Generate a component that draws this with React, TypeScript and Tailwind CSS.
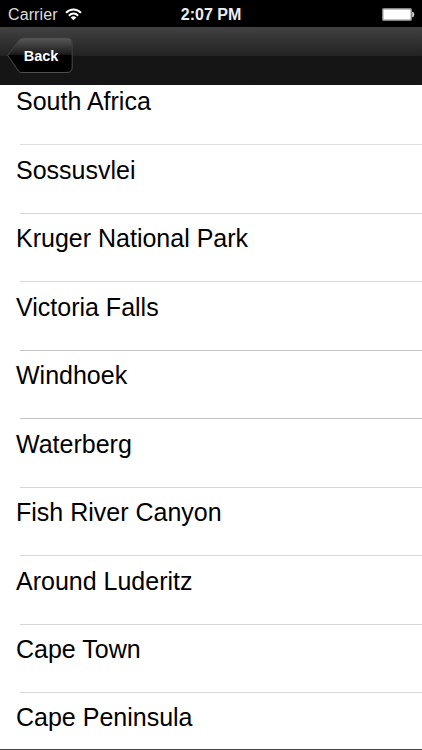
interface Place {
  name: string;
  line: string;
}

const PLACES: Place[] = [
  { name: "South Africa", line: "bg-[#dedede]" },
  { name: "Sossusvlei", line: "bg-[#d6d6d6]" },
  { name: "Kruger National Park", line: "bg-[#d6d6d6]" },
  { name: "Victoria Falls", line: "bg-[#c4c4c4]" },
  { name: "Windhoek", line: "bg-[#c4c4c4]" },
  { name: "Waterberg", line: "bg-[#d6d6d6]" },
  { name: "Fish River Canyon", line: "bg-[#d6d6d6]" },
  { name: "Around Luderitz", line: "bg-[#d6d6d6]" },
  { name: "Cape Town", line: "bg-[#d6d6d6]" },
];

export default function App() {
  return (
    <div className="flex h-[750px] w-[422px] flex-col overflow-hidden bg-white font-['Liberation_Sans',Arial,sans-serif]">
      <StatusBar />
      <NavBar />

      {/* Places list */}
      <ul className="flex min-h-0 flex-1 flex-col overflow-hidden text-[25px] leading-[30px] text-black">
        {PLACES.map((p) => (
          <li key={p.name} className="flex h-[68.5px] shrink-0 flex-col justify-end first:h-[60px]">
            <p className="pl-4 whitespace-nowrap">{p.name}</p>
            <div className={`mt-[28px] ml-5 h-px shrink-0 ${p.line}`} />
          </li>
        ))}
        <li className="pt-[9px] pl-4">Cape Peninsula</li>
      </ul>
      <div className="h-px shrink-0 bg-[#444444]" />
    </div>
  );
}

function StatusBar() {
  return (
    <div className="grid h-[27px] shrink-0 grid-cols-3 items-center bg-black pt-[2px] text-white">
      <div className="flex items-center gap-[7px] pl-2">
        <span className="text-[16px] leading-5 tracking-[0.1px] text-[#dddddd]">Carrier</span>
        <WifiIcon />
      </div>
      <p className="text-center text-[16px] leading-5 font-bold text-[#eeeeee]">2:07 PM</p>
      <div className="flex justify-end pr-[7px]">
        <BatteryIcon />
      </div>
    </div>
  );
}

function NavBar() {
  return (
    <div className="flex h-[58px] shrink-0 flex-col bg-linear-to-b from-[#424242] from-0% via-[#222222] via-50% to-[#151515] to-50% pt-[10px] pl-[7px]">
      <button className="grid h-[37px] w-[67px]">
        <svg width="67" height="37" viewBox="0 0 67 37" className="col-start-1 row-start-1">
          <defs>
            <linearGradient id="back" x1="0" y1="0" x2="0" y2="1">
              <stop offset="0" stopColor="#5a5a5a" />
              <stop offset="0.48" stopColor="#1a1a1a" />
              <stop offset="0.5" stopColor="#000000" />
              <stop offset="1" stopColor="#000000" />
            </linearGradient>
            <linearGradient id="edge" x1="0" y1="0" x2="0" y2="1">
              <stop offset="0" stopColor="#3a3a3a" />
              <stop offset="0.5" stopColor="#444444" />
              <stop offset="1" stopColor="#505050" />
            </linearGradient>
          </defs>
          <path
            d="M16 .8H60Q65.200 .8 65.200 6V30Q65.200 35.500 60 35.500H14.500Q12.500 35.500 11.500 34L.8 18.500L11.500 3.500Q13.500 .8 16 .8Z"
            fill="url(#back)"
            stroke="url(#edge)"
            strokeWidth="1"
          />
        </svg>
        <span className="col-start-1 row-start-1 self-center pl-[1px] text-center text-[14.5px] leading-5 font-bold text-white">
          Back
        </span>
      </button>
    </div>
  );
}

function WifiIcon() {
  return (
    <svg width="17" height="13" viewBox="0 0 17 13" fill="none" stroke="#ffffff" strokeWidth="2">
      <path d="M1 4.900C5.200 .3 11.800 .3 16 4.900" />
      <path d="M3.900 7.700C6.500 4.900 10.500 4.900 13.100 7.700" />
      <path d="M8.500 12.200L5.700 9.500Q8.500 7.200 11.300 9.500Z" fill="#ffffff" stroke="none" />
    </svg>
  );
}

function BatteryIcon() {
  return (
    <svg width="33" height="13" viewBox="0 0 33 13">
      <rect x=".7" y=".7" width="28.600" height="11.600" rx="1" fill="#ffffff" stroke="#858585" strokeWidth="1.400" />
      <path d="M30.500 4H31Q33 6.500 31 9H30.500Z" fill="#dddddd" stroke="#dddddd" strokeWidth=".6" />
    </svg>
  );
}
